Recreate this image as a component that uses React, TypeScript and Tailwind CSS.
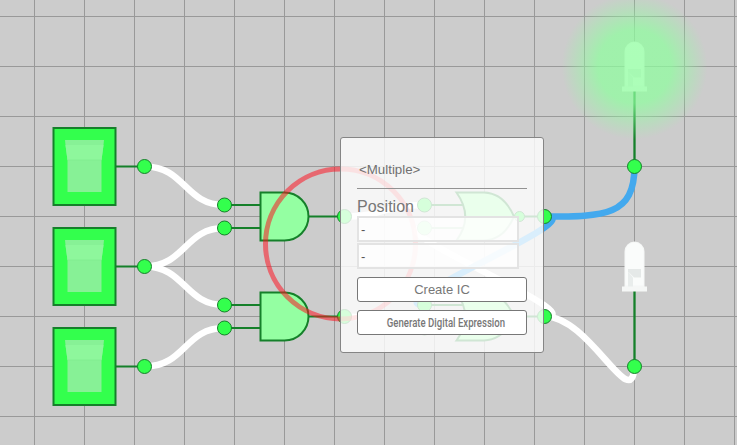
const DARK = '#15802a';
const BRIGHT = '#33ff4d';

function Terminal({ x, y, r = 7 }: { x: number; y: number; r?: number }) {
  return <circle cx={x} cy={y} r={r} fill={BRIGHT} stroke={DARK} strokeWidth="1" />;
}

function Toggle({ y }: { y: number }) {
  return (
    <g transform={`translate(0 ${y})`}>
      <path d="M116 39.5H144" stroke={DARK} strokeWidth="2" />
      <rect x="53.5" y="1" width="62" height="77" fill={BRIGHT} stroke={DARK} strokeWidth="2" />
      <path d="M65 13H104L103.5 18L101.5 33V65H67.5V33L65.5 18Z" fill="#87f196" />
      <path d="M65.5 18H103.5L101.5 33H67.5Z" fill="#8ef79c" />
      <path d="M67.5 33H101.5" stroke="#80eb8f" strokeWidth=".7" />
      <Terminal x={144.5} y={39.5} />
    </g>
  );
}

function AndGate({ y }: { y: number }) {
  return (
    <g transform={`translate(0 ${y})`} stroke={DARK} strokeWidth="2">
      <path d="M224 13H261M224 36H261M309 24.5H344" />
      <path d="M260.5 .5H284.500A24 24 0 0 1 284.500 48.500H260.500Z" fill="#94ffa2" />
      <Terminal x={224.500} y={13} />
      <Terminal x={224.500} y={36} />
      <Terminal x={344.500} y={24.500} />
    </g>
  );
}

function NorGate({ y }: { y: number }) {
  return (
    <g transform={`translate(0 ${y})`} stroke={DARK} strokeWidth="2">
      <path d="M424 13H464M424 36H464M524 24.500H544" />
      <path d="M456.500 .5H484C500 1 509 13 514 24.500C509 36 500 48 484 48.500H456.500Q474 25 456.500 .5Z" fill="#94ffa2" />
      <Terminal x={519.500} y={24.500} r={5} />
      <Terminal x={424.500} y={13} />
      <Terminal x={424.500} y={36} />
      <Terminal x={544.500} y={24.500} />
    </g>
  );
}

function Led({ y }: { y: number }) {
  return (
    <g transform={`translate(0 ${y})`}>
      <path d="M634.500 50V125" stroke={DARK} strokeWidth="2.300" />
      <path d="M624.500 46V11a10 10 0 0 1 20 0V46H647V51H622V46Z" fill="#f5f7f6" />
      <path d="M625.500 45V11a9 9 0 0 1 18 0V45Z" fill="#fafcfb" />
      <path d="M628 28.500H641V37H634L628 31Z" fill="#e5e9e8" />
      <path d="M628 31L633 37V46H628Z" fill="#e9edec" />
    </g>
  );
}

function Schematic() {
  return (
    <svg className="block h-full w-full" viewBox="0 0 737 445">
      <defs>
        <pattern id="grid" x="34" y="16" width="50" height="50" patternUnits="userSpaceOnUse">
          <path d="M.5 0V50M0 .5H50" stroke="#999" strokeWidth="1" />
        </pattern>
        <radialGradient id="glow">
          <stop offset="0" stopColor="#8fff9f" stopOpacity=".73" />
          <stop offset=".5" stopColor="#8fff9f" stopOpacity=".72" />
          <stop offset="1" stopColor="#8fff9f" stopOpacity="0" />
        </radialGradient>
      </defs>
      <rect width="737" height="445" fill="#ccc" />
      <rect width="737" height="445" fill="url(#grid)" />
      <g fill="none" stroke="#fff" strokeWidth="6.500">
        <path d="M145 166.500C185 166.500 185 205 224 205" />
        <path d="M145 266.500C185 266.500 185 228 224 228" />
        <path d="M145 266.500C185 266.500 185 305 224 305" />
        <path d="M145 366.500C185 366.500 185 328 224 328" />
        <path d="M344 216.500C384 216.500 384 205 424 205" />
        <path d="M344 316.500C384 316.500 384 328 424 328" />
        <path d="M545 316.500C595 316.500 375 228 424 228" />
        <path d="M545 316.500C590 316.500 632 416 634.500 366" />
        <g stroke="#43a9ee">
          <path d="M545 216.500C595 216.500 375 305 424 305" />
          <path d="M545 216.500C605 216.500 634.500 216 634.500 166" />
        </g>
      </g>
      <Toggle y={127} />
      <Toggle y={227} />
      <Toggle y={327} />
      <AndGate y={192} />
      <AndGate y={292} />
      <NorGate y={192} />
      <NorGate y={292} />
      <Led y={40.5} />
      <Led y={240.5} />
      <circle cx="634.500" cy="66.500" r="73" fill="url(#glow)" />
      <Terminal x={634.500} y={166.500} />
      <Terminal x={634.500} y={366.500} />
      <circle cx="340.500" cy="244" r="75" fill="none" stroke="#ff0f1e" strokeOpacity=".53" strokeWidth="5" />
    </svg>
  );
}

function PropertiesPanel() {
  return (
    <section className="absolute left-[340px] top-[137px] flex h-[216px] w-[204px] flex-col rounded-[3px] border border-[#858585] bg-white/80 px-4 pt-[22px] text-[#777]">
      <h2 className="h-[29px] border-b border-[#929292] pl-[2px] text-[13.3px] leading-[20px] text-[#707070]">&lt;Multiple&gt;</h2>
      <label className="mt-[7px] h-[20px] text-[16px] leading-[22px]">Position</label>
      <input aria-label="X position" defaultValue="-" className="h-[26px] w-[162px] border-2 border-[#e3e3e3] bg-white/75 px-0.5 text-[13px] text-[#555] outline-none" />
      <input aria-label="Y position" defaultValue="-" className="mt-px h-[26px] w-[162px] border-2 border-[#e3e3e3] bg-white/75 px-0.5 text-[13px] text-[#555] outline-none" />
      <button className="mt-2 h-[25px] shrink-0 rounded-[3px] border border-[#777] bg-white text-[13px] leading-[22px]">Create IC</button>
      <button className="mt-2 flex h-[25px] shrink-0 items-center justify-center rounded-[3px] border border-[#777] bg-white pl-[7px] font-['Roboto','Liberation_Sans',sans-serif] text-[12px] font-medium">
        <span className="origin-center scale-x-[.8] whitespace-nowrap">Generate Digital Expression</span>
      </button>
    </section>
  );
}

export default function App() {
  return (
    <main className="relative h-[445px] w-[737px] overflow-hidden font-['Liberation_Sans',Arial,sans-serif]">
      <Schematic />
      <PropertiesPanel />
    </main>
  );
}
